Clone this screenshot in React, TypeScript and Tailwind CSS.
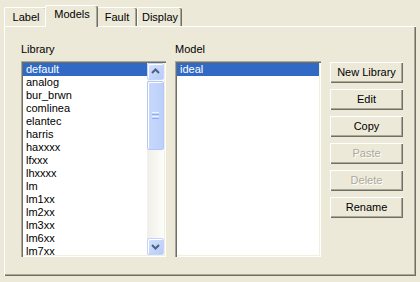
import React from "react";

const libs = [
  "default",
  "analog",
  "bur_brwn",
  "comlinea",
  "elantec",
  "harris",
  "haxxxx",
  "lfxxx",
  "lhxxxx",
  "lm",
  "lm1xx",
  "lm2xx",
  "lm3xx",
  "lm6xx",
  "lm7xx",
];

function Chevron({ up }: { up: boolean }) {
  return (
    <svg width="15" height="15" viewBox="0 0 15 15">
      <polyline
        points={up ? "4,9 7.5,5.5 11,9" : "4,6 7.5,9.5 11,6"}
        fill="none"
        stroke="#4d6185"
        strokeWidth="2"
      />
    </svg>
  );
}

function ScrollBtn({ up }: { up: boolean }) {
  return (
    <div className="h-[17px] w-[17px] rounded-[2px] border border-[#c3d3fd] bg-gradient-to-br from-[#d4e2fd] to-[#b6cbf8] shadow-[inset_1px_1px_#fff] flex items-center justify-center">
      <Chevron up={up} />
    </div>
  );
}

function Btn({ label, disabled }: { label: string; disabled?: boolean }) {
  return (
    <div
      className={
        "h-[21px] w-[73px] flex items-center justify-center bg-[#ece9d8] shadow-[inset_1px_1px_#fff,inset_-1px_-1px_#716f64,inset_-2px_-2px_#aca899] " +
        (disabled ? "text-[#aca899] [text-shadow:1px_1px_#fff]" : "text-black")
      }
    >
      {label}
    </div>
  );
}

function Tab({ label, w, selected }: { label: string; w: string; selected?: boolean }) {
  if (selected) {
    return (
      <div
        className={
          w +
          " -mx-[2px] h-[22px] -mb-[1px] relative z-10 bg-[#ece9d8] rounded-t-[2px] border-l border-t border-white shadow-[inset_-1px_0_#716f64,inset_-2px_0_#aca899] flex justify-center pt-[2px]"
        }
      >
        {label}
      </div>
    );
  }
  return (
    <div
      className={
        w +
        " h-[19px] bg-[#ece9d8] rounded-t-[2px] border-l border-t border-white shadow-[inset_-1px_0_#716f64,inset_-2px_0_#aca899] flex justify-center pt-[3px]"
      }
    >
      {label}
    </div>
  );
}

export default function App() {
  return (
    <div className="w-[420px] h-[282px] bg-[#ece9d8] pt-[7px] pl-[4px] text-[11px] leading-[13px] text-black font-['Liberation_Sans',Arial,sans-serif] overflow-hidden">
      <div className="flex items-end h-[19px]">
        <Tab label="Label" w="w-[43px]" />
        <Tab label="Models" w="w-[53px]" selected />
        <Tab label="Fault" w="w-[41px]" />
        <Tab label="Display" w="w-[45px]" />
      </div>
      <div className="w-[412px] h-[250px] bg-[#ece9d8] shadow-[inset_1px_1px_#fff,inset_-1px_-1px_#716f64,inset_-2px_-2px_#aca899] flex pl-[17px] pt-[17px]">
        {/* Library column */}
        <div className="w-[145px] flex flex-col">
          <div className="h-[13px] mb-[5px]">Library</div>
          <div className="h-[196px] bg-white p-[2px] shadow-[inset_1px_1px_#aca899,inset_2px_2px_#716f64,inset_-1px_-1px_#fff,inset_-2px_-2px_#f1efe2] flex">
            <div className="flex-1 overflow-hidden">
              {libs.map((l, i) => (
                <div
                  key={l}
                  className={
                    "h-[13px] pl-[3px] " +
                    (i === 0 ? "bg-[#316ac5] text-white" : "")
                  }
                >
                  {l}
                </div>
              ))}
            </div>
            <div className="w-[17px] flex flex-col bg-gradient-to-r from-[#f0efe8] to-[#fdfdfa]">
              <ScrollBtn up />
              <div className="flex-1 pt-[1px]">
                <div className="h-[69px] w-[17px] rounded-[2px] border border-[#b4c8f6] bg-gradient-to-r from-[#c9d8fc] to-[#bcd0fa] shadow-[inset_1px_1px_#fff] flex flex-col items-center justify-center gap-[1px]">
                  <div className="w-[7px] h-[1px] bg-[#eef4fe]" />
                  <div className="w-[7px] h-[1px] bg-[#8cb0f8]" />
                  <div className="w-[7px] h-[1px] bg-[#eef4fe]" />
                  <div className="w-[7px] h-[1px] bg-[#8cb0f8]" />
                </div>
              </div>
              <ScrollBtn up={false} />
            </div>
          </div>
        </div>
        {/* Model column */}
        <div className="w-[146px] ml-[9px] flex flex-col">
          <div className="h-[13px] mb-[5px]">Model</div>
          <div className="h-[196px] bg-white p-[2px] shadow-[inset_1px_1px_#aca899,inset_2px_2px_#716f64,inset_-1px_-1px_#fff,inset_-2px_-2px_#f1efe2]">
            <div className="h-[13px] pl-[3px] bg-[#316ac5] text-white">ideal</div>
          </div>
        </div>
        {/* Buttons */}
        <div className="ml-[9px] mt-[19px] flex flex-col gap-[6px]">
          <Btn label="New Library" />
          <Btn label="Edit" />
          <Btn label="Copy" />
          <Btn label="Paste" disabled />
          <Btn label="Delete" disabled />
          <Btn label="Rename" />
        </div>
      </div>
    </div>
  );
}
